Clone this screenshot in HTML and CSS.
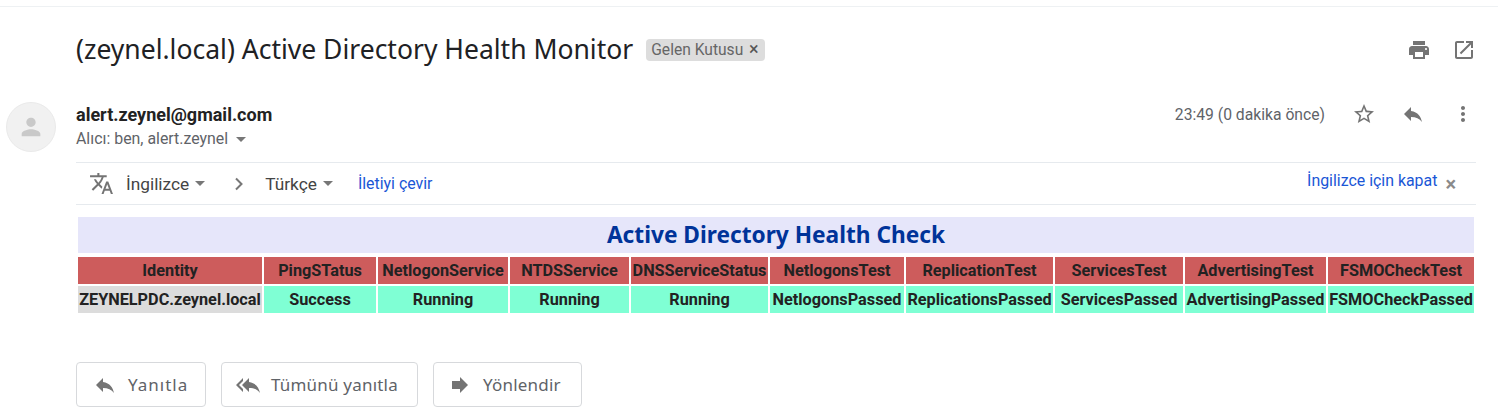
FILE: index.html
```html
<!DOCTYPE html>
<html lang="tr">
<head>
<meta charset="utf-8">
<title>Active Directory Health Monitor</title>
<link rel="stylesheet" href="styles.css">
</head>
<body>
<div class="topline"></div>
<header class="subject-row">
  <h1 class="subject">(zeynel.local) Active Directory Health Monitor</h1>
  <span class="tag">Gelen Kutusu <span class="tag-x">×</span></span>
  <span class="spacer"></span>
  <svg class="icon ic-print" viewBox="0 0 24 24"><path d="M19 8H5c-1.66 0-3 1.34-3 3v6h4v4h12v-4h4v-6c0-1.66-1.34-3-3-3zm-3 11H8v-5h8v5zm3-7c-.55 0-1-.45-1-1s.45-1 1-1 1 .45 1 1-.45 1-1 1zm-1-9H6v4h12V3z"/></svg>
  <svg class="icon ic-open" viewBox="0 0 24 24"><path d="M19 19H5V5h7V3H5c-1.11 0-2 .9-2 2v14c0 1.1.89 2 2 2h14c1.1 0 2-.9 2-2v-7h-2v7zM14 3v2h3.59l-9.83 9.83 1.41 1.41L19 6.41V10h2V3h-7z"/></svg>
</header>
<section class="sender-row">
  <div class="avatar"><svg viewBox="0 0 24 24"><path d="M12 12c2.21 0 4-1.79 4-4s-1.79-4-4-4-4 1.79-4 4 1.79 4 4 4zm0 2c-2.67 0-8 1.34-8 4v2h16v-2c0-2.66-5.33-4-8-4z"/></svg></div>
  <div class="sender-info">
    <div class="sender-name">alert.zeynel@gmail.com</div>
    <div class="sender-to">Alıcı: ben, alert.zeynel <span class="caret caret-to"></span></div>
  </div>
  <div class="meta">
    <span class="time">23:49 (0 dakika önce)</span>
    <svg class="icon ic-star" viewBox="0 0 24 24"><path d="M22 9.24l-7.19-.62L12 2 9.19 8.63 2 9.24l5.46 4.73L5.82 21 12 17.27 18.18 21l-1.63-7.03L22 9.24zM12 15.4l-3.76 2.27 1-4.28-3.32-2.88 4.38-.38L12 6.1l1.71 4.04 4.38.38-3.32 2.88 1 4.28L12 15.4z"/></svg>
    <svg class="icon ic-reply" viewBox="0 0 24 24"><path d="M10 9V5l-7 7 7 7v-4.1c5 0 8.5 1.6 11 5.1-1-5-4-10-11-11z"/></svg>
    <svg class="icon ic-more" viewBox="0 0 24 24"><path d="M12 8c1.1 0 2-.9 2-2s-.9-2-2-2-2 .9-2 2 .9 2 2 2zm0 2c-1.1 0-2 .9-2 2s.9 2 2 2 2-.9 2-2-.9-2-2-2zm0 6c-1.1 0-2 .9-2 2s.9 2 2 2 2-.9 2-2-.9-2-2-2z"/></svg>
  </div>
</section>
<section class="translate-bar">
  <svg class="icon ic-translate" viewBox="0 0 24 24"><path d="M12.87 15.07l-2.54-2.51.03-.03c1.74-1.94 2.98-4.17 3.71-6.53H17V4h-7V2H8v2H1v1.99h11.17C11.5 7.92 10.44 9.75 9 11.35 8.07 10.32 7.3 9.19 6.69 8h-2c.73 1.63 1.73 3.17 2.98 4.56l-5.09 5.02L4 19l5-5 3.11 3.11.76-2.04zM18.5 10h-2L12 22h2l1.12-3h4.75L21 22h2l-4.5-12zm-2.62 7l1.62-4.33L19.12 17h-3.24z"/></svg>
  <span class="lang lang-src">İngilizce</span><span class="caret caret-lang"></span>
  <svg class="chev" viewBox="0 0 10 14"><path d="M2 1.5 7.5 7 2 12.5" /></svg>
  <span class="lang">Türkçe</span><span class="caret caret-lang"></span>
  <a class="link link-translate">İletiyi çevir</a>
  <span class="spacer"></span>
  <a class="link link-off">İngilizce için kapat</a>
  <span class="close-x">×</span>
</section>
<main class="report">
  <div class="report-title">Active Directory Health Check</div>
  <table class="report-table">
    <tr>
      <th class="c1">Identity</th><th class="c2">PingSTatus</th><th class="c3">NetlogonService</th><th class="c4">NTDSService</th><th class="c5">DNSServiceStatus</th><th class="c6">NetlogonsTest</th><th class="c7">ReplicationTest</th><th class="c8">ServicesTest</th><th class="c9">AdvertisingTest</th><th class="c10">FSMOCheckTest</th>
    </tr>
    <tr>
      <td class="identity">ZEYNELPDC.zeynel.local</td><td>Success</td><td>Running</td><td>Running</td><td>Running</td><td>NetlogonsPassed</td><td>ReplicationsPassed</td><td>ServicesPassed</td><td>AdvertisingPassed</td><td>FSMOCheckPassed</td>
    </tr>
  </table>
</main>
<footer class="actions">
  <a class="btn btn-reply"><svg class="icon" viewBox="0 0 24 24"><path d="M10 9V5l-7 7 7 7v-4.1c5 0 8.5 1.6 11 5.1-1-5-4-10-11-11z"/></svg>Yanıtla</a>
  <a class="btn btn-all"><svg class="icon" viewBox="0 0 24 24"><path d="M7 8V5l-7 7 7 7v-3l-4-4 4-4zm6 1V5l-7 7 7 7v-4.1c5 0 8.5 1.6 11 5.1-1-5-4-10-11-11z"/></svg>Tümünü yanıtla</a>
  <a class="btn btn-fwd"><svg class="icon" viewBox="0 0 24 24"><path d="M12 8V4l8 8-8 8v-4H4V8z"/></svg>Yönlendir</a>
</footer>
</body>
</html>
```
FILE: styles.css
```css
* { box-sizing: border-box; }
html, body { margin: 0; padding: 0; }
body {
  width: 1498px;
  height: 414px;
  overflow: hidden;
  background: #fff;
  font-family: Roboto, "Liberation Sans", sans-serif;
  color: #222;
}
.icon { display: block; flex: none; width: 24px; height: 24px; fill: #747474; }
.spacer { flex: 1; }

.topline { height: 1px; margin-top: 6px; background: #eef1f3; }

.subject-row {
  display: flex;
  align-items: center;
  height: 86px;
  padding: 0 22px 0 76px;
}
.subject {
  margin: -3px 0 0;
  font-family: "Noto Sans", "Open Sans", sans-serif;
  font-size: 26.5px;
  font-weight: 400;
  color: #202124;
}
.tag {
  margin-left: 13px;
  padding: 0 5px;
  width: 119px;
  height: 22px;
  line-height: 22px;
  border-radius: 4px;
  background: #dddddd;
  color: #666;
  font-size: 15.6px;
  white-space: nowrap;
}
.tag-x { font-size: 18px; line-height: 18px; color: #555; margin-left: 2px; }
.ic-open { margin-left: 21px; }

.sender-row {
  display: flex;
  height: 60px;
  margin-top: 9px;
  padding: 0 23px 0 6px;
}
.avatar {
  flex: none;
  width: 50px;
  height: 50px;
  border-radius: 50%;
  background: #f1f1f1;
  border: 1px solid #eaeaea;
  display: flex;
  align-items: center;
  justify-content: center;
}
.avatar svg { width: 28px; height: 28px; fill: #c9c9c9; }
.sender-info { margin-left: 20px; padding-top: 3px; flex: 1; }
.sender-name { font-size: 18px; font-weight: 700; line-height: 20px; color: #222; }
.sender-to { margin-top: 5px; font-size: 15.9px; line-height: 18px; color: #5f6368; display: flex; align-items: center; }
.caret {
  display: inline-block;
  width: 0; height: 0;
  border-left: 5.5px solid transparent;
  border-right: 5.5px solid transparent;
  border-top: 5px solid #777;
}
.caret-to { margin-left: 8px; }
.meta { display: flex; align-items: center; height: 24px; }
.time { font-size: 15.7px; color: #5f6368; margin-right: 27px; }
.ic-reply { margin-left: 25px; }
.ic-more { margin-left: 26px; }

.translate-bar {
  display: flex;
  align-items: center;
  height: 43px;
  margin: 0 22px 0 76px;
  padding-left: 13px;
  border-top: 1px solid #e6eaee;
  border-bottom: 1px solid #e6eaee;
}
.ic-translate { width: 25px; height: 25px; }
.lang { font-size: 17.3px; color: #444; }
.lang-src { margin-left: 12px; }
.caret-lang { margin-left: 6px; }
.chev { width: 10px; height: 14px; margin: 0 21px 0 29px; fill: none; stroke: #777; stroke-width: 2; }
.link { color: #1a56d6; font-size: 15.9px; }
.link-translate { margin-left: 25px; }
.link-off { position: relative; top: -3px; }
.close-x { margin: 0 20px 0 8px; font-size: 20px; font-weight: 700; color: #8a8a8a; line-height: 20px; }

.report { margin: 12px 24px 0 78px; }
.report-title {
  height: 36px;
  line-height: 36px;
  text-align: center;
  background: #e6e6fa;
  color: #003399;
  font-family: "Noto Sans", "Open Sans", sans-serif;
  font-size: 22.7px;
  font-weight: 700;
}
.report-table {
  margin-top: 2px;
  margin-left: -2px;
  border-collapse: separate;
  border-spacing: 2px;
  table-layout: fixed;
  width: 1400px;
}
.report-table th, .report-table td {
  padding: 0;
  height: 27px;
  text-align: center;
  font-size: 16.25px;
  font-weight: 700;
  white-space: nowrap;
  color: #222;
}
.report-table th { background: #cd5c5c; }
.report-table td { background: #7fffd4; }
.report-table td.identity { background: #dcdcdc; }
.c1 { width: 184px; }
.c2 { width: 112px; }
.c3 { width: 130px; }
.c4 { width: 119px; }
.c5 { width: 137px; }
.c6 { width: 134px; }
.c7 { width: 147px; }
.c8 { width: 128px; }
.c9 { width: 141px; }
.c10 { width: 146px; }

.actions { display: flex; gap: 15px; margin: 47px 0 0 76px; }
.btn {
  display: flex;
  align-items: center;
  height: 45px;
  border: 1px solid #d7d9dc;
  border-radius: 4px;
  font-family: "Noto Sans", "Open Sans", sans-serif;
  font-size: 17px;
  letter-spacing: .2px;
  color: #5f6368;
}
.btn-reply { width: 130px; padding-left: 16px; letter-spacing: 1px; }
.btn-all { width: 197px; padding-left: 14px; }
.btn-fwd { width: 149px; padding-left: 14px; }
.btn .icon { margin-right: 11px; }
```
